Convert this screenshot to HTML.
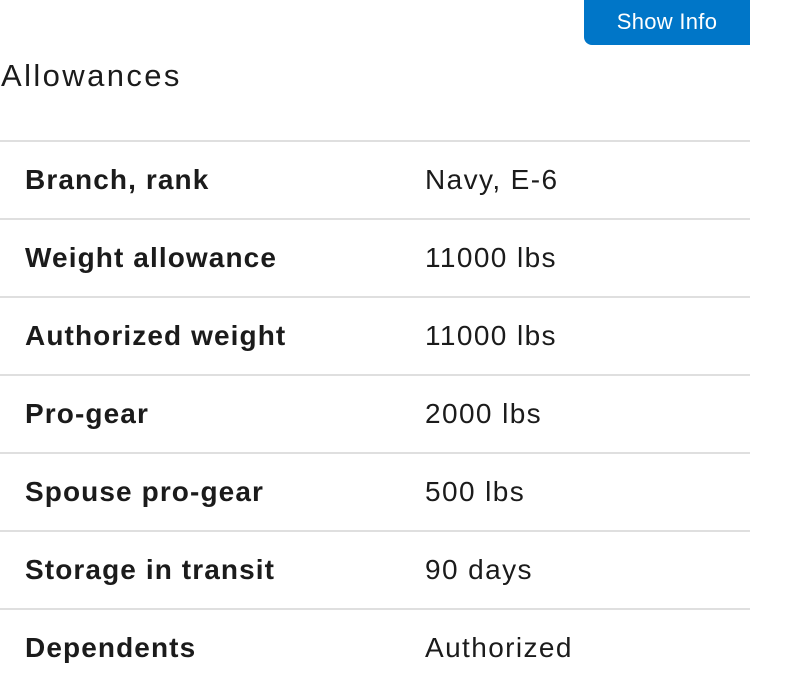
<!DOCTYPE html>
<html><head><style>
body{margin:0;width:800px;height:688px;background:#fff;font-family:"Liberation Sans",sans-serif;color:#1b1b1b;position:relative;overflow:hidden}
.btn{position:absolute;left:584px;top:0;width:166px;height:45px;background:#0076c8;color:#fff;font-size:22px;letter-spacing:0.3px;line-height:44px;text-align:center;border-radius:0 0 0 8px}
h1{position:absolute;left:1px;top:58px;margin:0;font-weight:normal;font-size:31px;letter-spacing:2.4px;line-height:36px}
.row{position:absolute;left:0;width:750px;height:76px;border-top:2px solid #dfdfdf;font-size:28px;line-height:76px}
.row b{position:absolute;left:25px;letter-spacing:1.1px}
.row span{position:absolute;left:425px;letter-spacing:1.4px}
</style></head><body>
<div class="btn">Show Info</div>
<h1>Allowances</h1>
<div class="row" style="top:140px"><b>Branch, rank</b><span>Navy, E-6</span></div>
<div class="row" style="top:218px"><b>Weight allowance</b><span>11000 lbs</span></div>
<div class="row" style="top:296px"><b>Authorized weight</b><span>11000 lbs</span></div>
<div class="row" style="top:374px"><b>Pro-gear</b><span>2000 lbs</span></div>
<div class="row" style="top:452px"><b>Spouse pro-gear</b><span>500 lbs</span></div>
<div class="row" style="top:530px"><b>Storage in transit</b><span>90 days</span></div>
<div class="row" style="top:608px"><b>Dependents</b><span>Authorized</span></div>
</body></html>
